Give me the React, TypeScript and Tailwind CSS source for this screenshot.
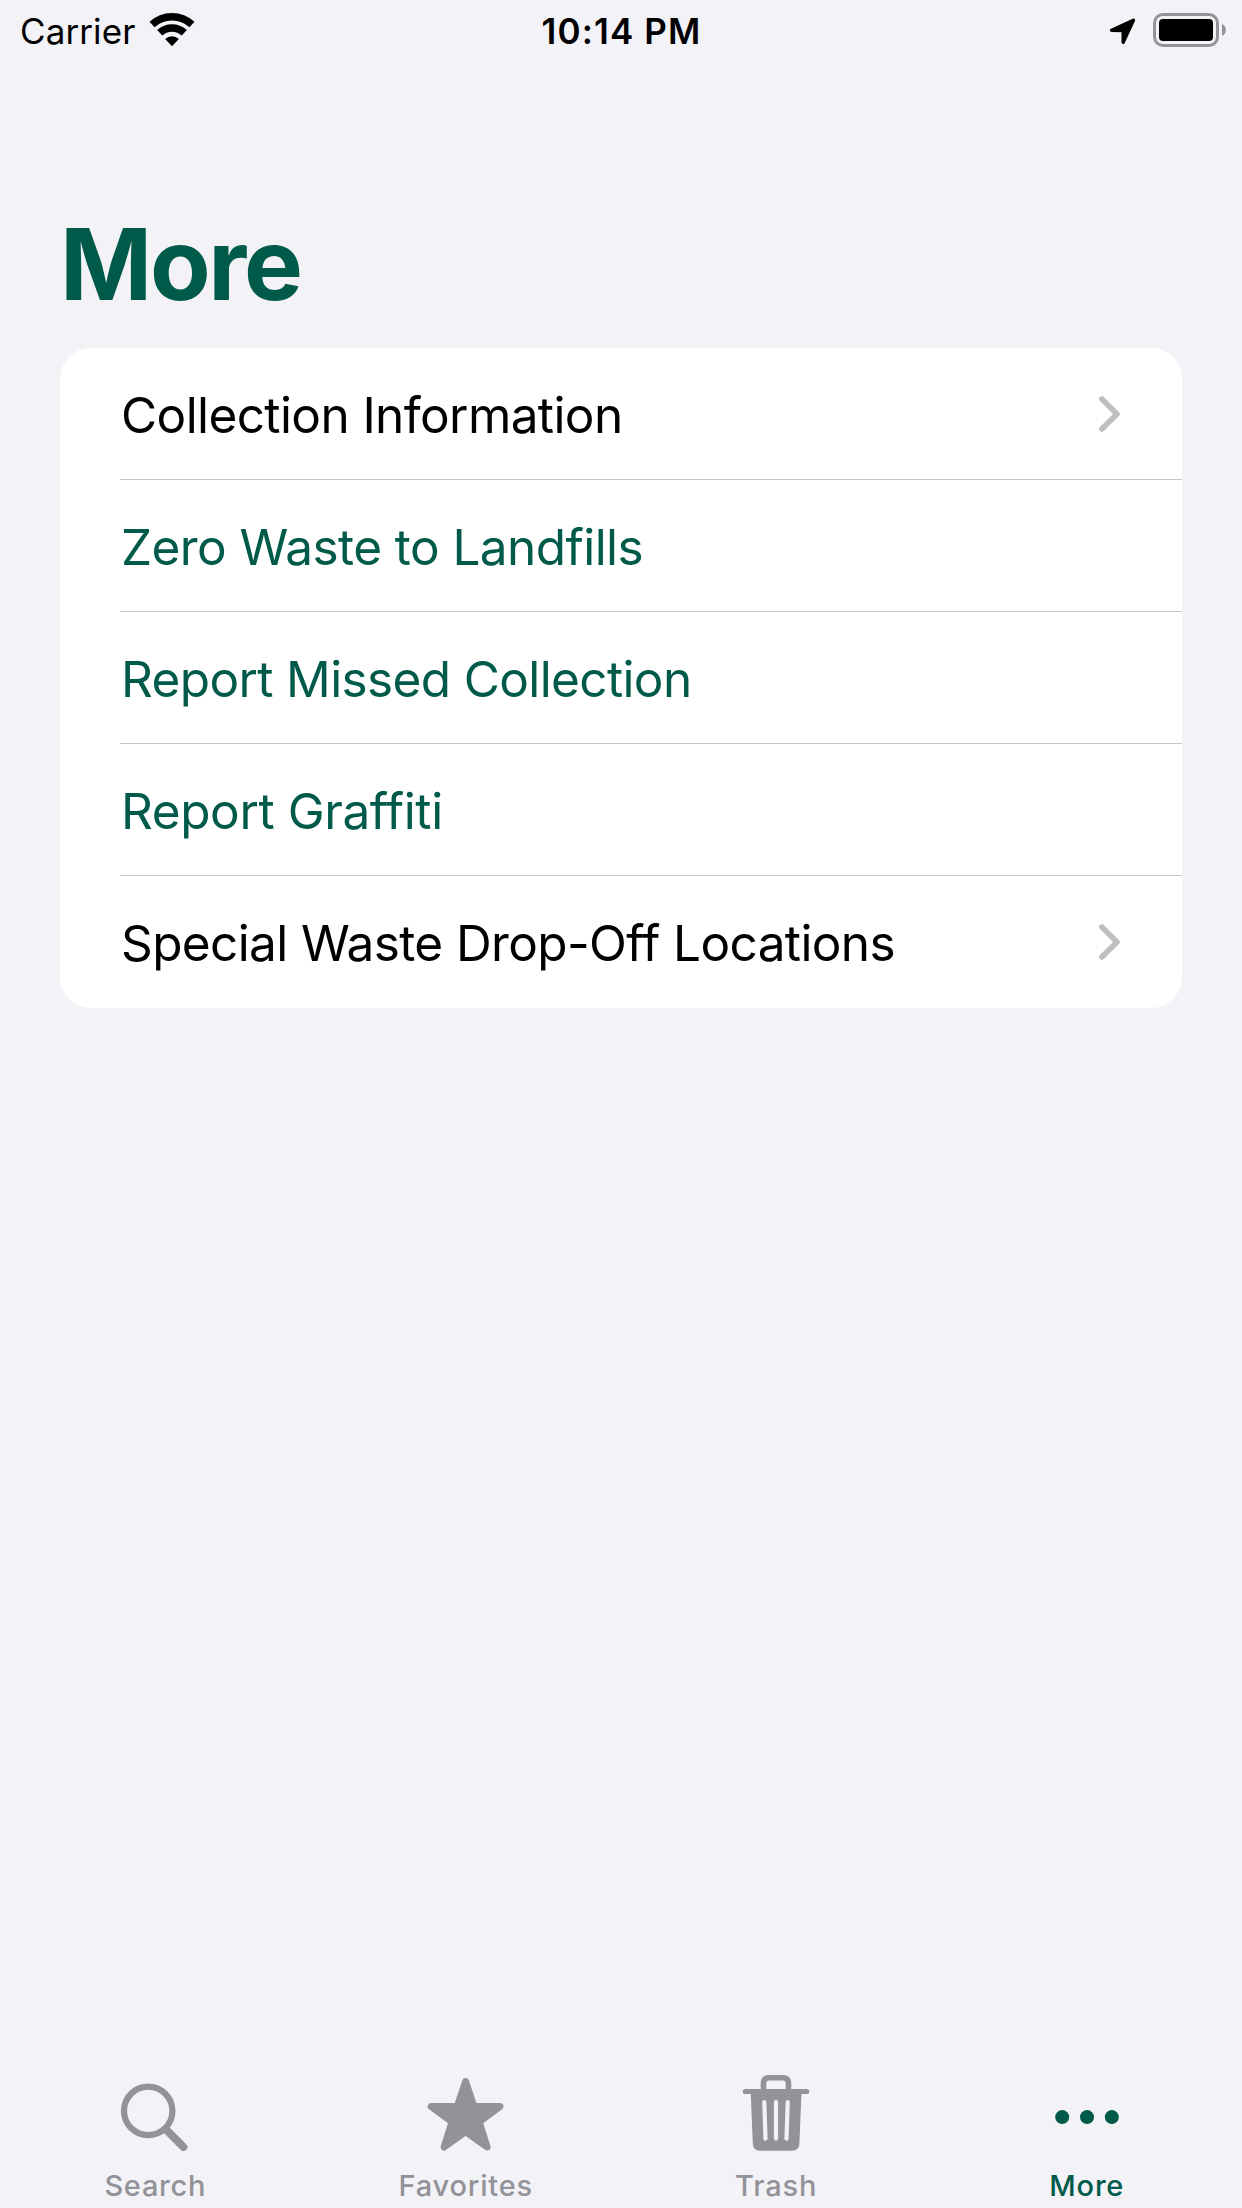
import type { ReactNode } from "react";

const rows = [
  { label: "Collection Information", tone: "text-black tracking-[-0.6px]", chevron: true },
  { label: "Zero Waste to Landfills", tone: "text-[#005a4a] tracking-[-0.57px]", chevron: false },
  { label: "Report Missed Collection", tone: "text-[#005a4a] tracking-[-0.63px]", chevron: false },
  { label: "Report Graffiti", tone: "text-[#005a4a] tracking-[-0.4px]", chevron: false },
  { label: "Special Waste Drop-Off Locations", tone: "text-black tracking-[-0.62px]", chevron: true },
];

function WifiIcon() {
  return (
    <svg className="ml-[13px] h-[36px] w-[48px]" viewBox="0 0 48 36" fill="none">
      <path d="M4.05 13.6A29.25 29.25 0 0 1 43.95 13.6" stroke="#000" strokeWidth="7.5" />
      <path d="M11.7 21.8A18 18 0 0 1 36.3 21.8" stroke="#000" strokeWidth="7.5" />
      <path d="M24 35.2L17.2 27.9A10 10 0 0 1 30.8 27.9Z" fill="#000" />
    </svg>
  );
}

function LocationIcon() {
  return (
    <svg className="h-[28px] w-[28px]" viewBox="0 0 28 28">
      <path
        d="M2.6 13.4L24.4 3.2L14.2 25.2V13.6Z"
        fill="#000"
        stroke="#000"
        strokeWidth="3.4"
        strokeLinejoin="round"
      />
    </svg>
  );
}

function BatteryIcon() {
  return (
    <svg className="ml-4 h-[34px] w-[74px]" viewBox="0 0 74 34">
      <rect x="1.5" y="1.5" width="63" height="31" rx="8.5" fill="none" stroke="#949397" strokeWidth="3" />
      <rect x="6" y="6" width="54" height="22" rx="4" fill="#000" />
      <path d="M69 11C74.2 13 74.2 21 69 23Z" fill="#949397" />
    </svg>
  );
}

function Chevron() {
  return (
    <svg className="h-[38px] w-[23px]" viewBox="0 0 23 38" fill="none">
      <path
        d="M3.9 3.9L19 19L3.9 34.1"
        stroke="#bfbfbf"
        strokeWidth="5.6"
        strokeLinecap="round"
        strokeLinejoin="round"
      />
    </svg>
  );
}

function SearchIcon() {
  return (
    <svg className="h-[84px] w-[80px]" viewBox="0 0 80 84" fill="none" stroke="#929398">
      <circle cx="33.2" cy="40.9" r="24.2" strokeWidth="6.2" />
      <path d="M51 59.5L68.4 77" strokeWidth="8" strokeLinecap="round" />
    </svg>
  );
}

function StarIcon() {
  return (
    <svg className="h-[84px] w-[80px]" viewBox="0 0 80 84">
      <path
        d="M39.6 11.5L47.9 36.3L74 36.5L53.1 51.9L61.1 77L39.6 61.6L18.1 77L26.1 51.9L5.2 36.5L31.3 36.3Z"
        fill="#929398"
        stroke="#929398"
        strokeWidth="7"
        strokeLinejoin="round"
      />
    </svg>
  );
}

function TrashIcon() {
  return (
    <svg className="h-[84px] w-[80px]" viewBox="0 0 80 84" fill="none">
      <path
        d="M27.5 21V13.5Q27.5 7.8 33.2 7.8H46.8Q52.5 7.8 52.5 13.5V21"
        stroke="#929398"
        strokeWidth="5.6"
      />
      <path d="M9.4 21.5H70.6" stroke="#929398" strokeWidth="5.2" strokeLinecap="round" />
      <path
        d="M14.7 22H65.5L63.4 73.5Q63 80.8 56 80.8H24Q17.2 80.8 16.8 73.5Z"
        fill="#929398"
      />
      <path
        d="M28.3 32.2L29.5 68.6M40 32.2V68.6M51.7 32.2L50.5 68.6"
        stroke="#f2f2f7"
        strokeWidth="4.2"
        strokeLinecap="round"
      />
    </svg>
  );
}

function MoreIcon() {
  return (
    <svg className="h-[84px] w-[80px]" viewBox="0 0 80 84" fill="#005a4a">
      <circle cx="15.2" cy="47.1" r="7" />
      <circle cx="40" cy="47.1" r="7" />
      <circle cx="64.8" cy="47.1" r="7" />
    </svg>
  );
}

function Tab({ label, tone, children }: { label: string; tone: string; children: ReactNode }) {
  return (
    <div className={`flex flex-1 flex-col items-center ${tone}`}>
      {children}
      <span className="mt-[14px] text-[29px] leading-[36px] font-medium">{label}</span>
    </div>
  );
}

export default function App() {
  return (
    <div className="flex h-[2208px] w-[1242px] flex-col bg-[#f2f2f7] font-['Inter',sans-serif]">
      <header className="grid h-[60px] grid-cols-3 text-[35px] leading-[62px] text-black">
        <div className="flex items-start pl-5">
          <span className="tracking-[0.1px]">Carrier</span>
          <div className="pt-[11px]">
            <WifiIcon />
          </div>
        </div>
        <div className="pl-px text-center font-semibold tracking-[1.15px]">10:14 PM</div>
        <div className="flex items-start justify-end pt-[13px] pr-[15px]">
          <div className="pt-1">
            <LocationIcon />
          </div>
          <BatteryIcon />
        </div>
      </header>

      <main className="flex-1 px-[60px]">
        <h1 className="pt-[144px] text-[99px] leading-[120px] font-bold tracking-[-2.3px] text-[#005a4a]">
          More
        </h1>
        <div className="mt-6 overflow-hidden rounded-[31px] bg-white pl-[60px]">
          {rows.map((row) => (
            <div
              key={row.label}
              className="flex h-[132px] items-center justify-between border-b border-[#c6c6c8] pr-[61px] last:border-b-0"
            >
              <span className={`pt-0.5 pl-px text-[49.5px] leading-[60px] ${row.tone}`}>{row.label}</span>
              {row.chevron && <Chevron />}
            </div>
          ))}
        </div>
      </main>

      <nav className="flex h-[138px]">
        <Tab label="Search" tone="text-[#929398] tracking-[0.72px]">
          <SearchIcon />
        </Tab>
        <Tab label="Favorites" tone="text-[#929398] tracking-[0.8px]">
          <StarIcon />
        </Tab>
        <Tab label="Trash" tone="text-[#929398] tracking-[0.88px]">
          <TrashIcon />
        </Tab>
        <Tab label="More" tone="text-[#005a4a] tracking-[0.79px]">
          <MoreIcon />
        </Tab>
      </nav>
    </div>
  );
}
